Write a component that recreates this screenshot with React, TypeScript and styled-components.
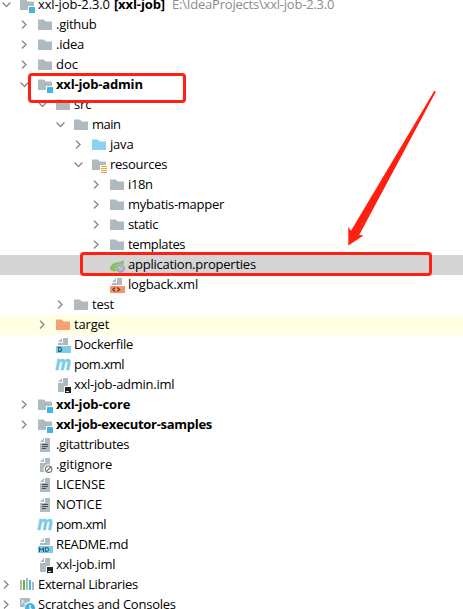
import React from 'react';
import styled, { createGlobalStyle } from 'styled-components';

const GlobalStyle = createGlobalStyle`
  body {
    margin: 0;
    background: #fff;
    overflow: hidden;
  }
`;

const GRAY = '#aeb9c0';
const BLUE = '#40b6e0';
const SKY = '#7ccbe8';
const RED = '#ff2012';

const Panel = styled.main`
  position: relative;
  width: 463px;
  height: 609px;
  overflow: hidden;
  background: #fff;
  color: #000;
  font-family: 'Open Sans', 'Noto Sans', sans-serif;
  font-size: 13px;
`;

const Tree = styled.ul`
  display: flex;
  flex-direction: column;
  margin: -5px 0 0;
  padding: 0;
  list-style: none;
`;

const Row = styled.li<{ $depth: number; $tone?: string }>`
  display: flex;
  flex: none;
  align-items: center;
  box-sizing: border-box;
  height: 20px;
  padding-left: ${(p) => 1 + p.$depth * 18}px;
  background: ${(p) => p.$tone ?? 'transparent'};
  white-space: pre;
`;

const Toggle = styled.span`
  display: flex;
  flex: none;
  width: 18px;
  height: 20px;
  align-items: center;
`;

const Glyph = styled.svg`
  flex: none;
  display: block;
  width: 16px;
  height: 16px;
  margin-right: 3px;
`;

const Label = styled.span<{ $tracking: number; $bold?: boolean }>`
  align-self: flex-start;
  line-height: 18px;
  font-weight: ${(p) => (p.$bold ? 700 : 400)};
  letter-spacing: ${(p) => p.$tracking}px;
`;

const Qualifier = styled(Label)`
  margin-left: 4px;
`;

const Path = styled(Label)`
  margin-left: 7px;
  color: #8c8c8c;
`;

const Outline = styled.div<{ $x: number; $y: number; $w: number; $h: number }>`
  position: absolute;
  left: ${(p) => p.$x}px;
  top: ${(p) => p.$y}px;
  width: ${(p) => p.$w}px;
  height: ${(p) => p.$h}px;
  box-sizing: border-box;
  border: 3px solid ${RED};
  border-radius: 4px;
`;

const ArrowMark = styled.svg`
  position: absolute;
  left: 340px;
  top: 85px;
  width: 105px;
  height: 165px;
`;

type IconName =
  | 'folder' | 'sources' | 'excluded' | 'module' | 'resources' | 'spring' | 'xml'
  | 'docker' | 'maven' | 'iml' | 'text' | 'ignore' | 'markdown' | 'libraries' | 'scratches';

const Folder = ({ fill = GRAY }: { fill?: string }) => (
  <path d="M1 2.500h5.800l2 2H15V13H1z" fill={fill} />
);

const Page = () => (
  <g fill={GRAY}>
    <path d="M7 1v4H3z" />
    <path d="M8 1h5v14H3V6h5z" />
  </g>
);

const ShortPage = () => (
  <g fill={GRAY}>
    <path d="M7 1v4H3z" />
    <path d="M8 1h5v7H3V6h5z" />
  </g>
);

const icons: Record<IconName, React.ReactNode> = {
  folder: <Folder />,
  sources: <Folder fill="#8ad3ee" />,
  excluded: <Folder fill="#f7a072" />,
  module: (
    <>
      <path d="M1 2.500h5.800l2 2H15V9H9v4H1z" fill={GRAY} />
      <path d="M10 10h6v6h-6z" fill={BLUE} />
    </>
  ),
  resources: (
    <>
      <path d="M1 2.500h5.800l2 2H15V8H9v5H1z" fill={GRAY} />
      <path d="M10 9h6v1h-6zM10 11h6v1h-6zM10 13h6v1h-6zM10 15h6v1h-6z" fill="#dba33c" />
    </>
  ),
  spring: (
    <>
      <path d="M14.300 2.500C15.300 5.500 15 8 13 10L8.500 13.600C6 14.800 2.500 14 1.300 12.700 .6 9.500 2.500 6.800 5.500 6c3.500-.9 6.800-.4 8.800-3.500z" fill="#83c067" />
      <circle cx="11.600" cy="11.600" r="4.800" fill="#d5d5d5" />
      <circle cx="11.600" cy="11.600" r="3.100" fill="#dfe3e6" stroke="#97a4ae" strokeWidth="1.400" />
      <circle cx="11.600" cy="11.600" r="4.100" fill="none" stroke="#97a4ae" strokeWidth="1" strokeDasharray="1.700 1.520" />
      <path d="M11.600 9.600v2M10.500 10.700a1.500 1.500 0 1 0 2.200 0" fill="none" stroke="#8593a0" strokeWidth=".8" />
    </>
  ),
  xml: (
    <>
      <ShortPage />
      <path d="M1 9h15v7H1z" fill="#f7946a" />
      <path d="M6.200 10.500l-2.400 2 2.400 2M8.300 10.500l2.400 2-2.400 2" fill="none" stroke="#673522" strokeWidth="1.100" />
    </>
  ),
  docker: (
    <>
      <ShortPage />
      <path d="M1 9h15v7H1z" fill={SKY} />
      <path d="M3.600 10.500v4h1a2 2 0 0 0 0-4z" fill="none" stroke="#26586d" strokeWidth="1.100" />
    </>
  ),
  maven: (
    <text x="0.200" y="13.200" fontSize="19" fontFamily="Open Sans, sans-serif" fontWeight="700" fontStyle="italic" textLength="15.800" lengthAdjust="spacingAndGlyphs" fill={SKY} stroke={SKY} strokeWidth=".5">
      m
    </text>
  ),
  iml: (
    <>
      <g fill={GRAY}>
        <path d="M7 1v4H3z" />
        <path d="M8 1h5v8H9v6H3V6h5z" />
      </g>
      <path d="M10 10h6v6h-6z" fill="#231f24" />
      <path d="M11.300 14h2.400v1h-2.400z" fill="#fff" />
    </>
  ),
  text: (
    <>
      <Page />
      <path d="M5 7h6v1H5zM5 9h6v1H5zM5 11h4v1H5z" fill="#4b5257" />
    </>
  ),
  ignore: (
    <>
      <g fill={GRAY}>
        <path d="M7 1v4H3z" />
        <path d="M8 1h5v6.500A5 5 0 0 0 7.500 15H3V6h5z" />
      </g>
      <circle cx="11.700" cy="12.200" r="3.200" fill="#fff" stroke="#6e6e6e" strokeWidth="1.100" />
      <path d="M9.500 14.400l4.400-4.400" stroke="#6e6e6e" strokeWidth="1.100" />
    </>
  ),
  markdown: (
    <>
      <ShortPage />
      <path d="M1 9h15v7H1z" fill={SKY} />
      <path d="M2.500 15v-4.400l2 2.800 2-2.800V15M8.500 10.600v3.900h1.200a1.950 1.950 0 0 0 0-3.900z" fill="none" stroke="#26586d" strokeWidth="1" />
    </>
  ),
  libraries: (
    <>
      <path d="M1 3h2v10H1zM7 1h2v12H7zM13 5h2v8h-2z" fill={GRAY} />
      <path d="M4 3h2v10H4z" fill="#62b543" />
      <path d="M10 3h2v10h-2z" fill={BLUE} />
    </>
  ),
  scratches: (
    <>
      <path d="M1 1h10v3.500a5.800 5.800 0 0 0-5.500 5.500H1z" fill={GRAY} />
      <path d="M2.200 2.500l2.500 2-2.500 2M5.500 6.700h2" fill="none" stroke="#fff" strokeWidth="1" />
      <circle cx="11" cy="11" r="5" fill={BLUE} />
      <path d="M11 8v3.300l1.800 1.200" fill="none" stroke="#fff" strokeWidth="1.200" />
    </>
  ),
};

const Chevron = ({ open }: { open: boolean }) => (
  <svg width="12" height="20" viewBox="0 0 12 20" fill="none" stroke="#8a8a8a" strokeWidth="1.400">
    {open ? <path d="M1.600 7.600l3.900 3.900 3.900-3.900" /> : <path d="M3 5.700l4 3.900-4 3.900" />}
  </svg>
);

type Node = {
  depth: number;
  icon: IconName;
  name: string;
  tracking: number;
  state?: 'open' | 'closed';
  bold?: boolean;
  tone?: string;
};

const nodes: Node[] = [
  { depth: 0, icon: 'module', name: 'xxl-job-2.3.0', tracking: -0.12, state: 'open' },
  { depth: 1, icon: 'folder', name: '.github', tracking: -0.28, state: 'closed' },
  { depth: 1, icon: 'folder', name: '.idea', tracking: -0.22, state: 'closed' },
  { depth: 1, icon: 'folder', name: 'doc', tracking: 0.05, state: 'closed' },
  { depth: 1, icon: 'module', name: 'xxl-job-admin', tracking: -0.17, state: 'open', bold: true },
  { depth: 2, icon: 'folder', name: 'src', tracking: -0.1, state: 'open' },
  { depth: 3, icon: 'folder', name: 'main', tracking: -0.5, state: 'open' },
  { depth: 4, icon: 'sources', name: 'java', tracking: -0.2, state: 'closed' },
  { depth: 4, icon: 'resources', name: 'resources', tracking: -0.26, state: 'open' },
  { depth: 5, icon: 'folder', name: 'i18n', tracking: -0.4, state: 'closed' },
  { depth: 5, icon: 'folder', name: 'mybatis-mapper', tracking: -0.27, state: 'closed' },
  { depth: 5, icon: 'folder', name: 'static', tracking: -0.34, state: 'closed' },
  { depth: 5, icon: 'folder', name: 'templates', tracking: -0.38, state: 'closed' },
  { depth: 5, icon: 'spring', name: 'application.properties', tracking: -0.25, tone: '#d5d5d5' },
  { depth: 5, icon: 'xml', name: 'logback.xml', tracking: -0.17 },
  { depth: 3, icon: 'folder', name: 'test', tracking: -0.25, state: 'closed' },
  { depth: 2, icon: 'excluded', name: 'target', tracking: -0.17, state: 'closed', tone: '#ffffe4' },
  { depth: 2, icon: 'docker', name: 'Dockerfile', tracking: -0.2 },
  { depth: 2, icon: 'maven', name: 'pom.xml', tracking: -0.45 },
  { depth: 2, icon: 'iml', name: 'xxl-job-admin.iml', tracking: -0.27 },
  { depth: 1, icon: 'module', name: 'xxl-job-core', tracking: -0.14, state: 'closed', bold: true },
  { depth: 1, icon: 'module', name: 'xxl-job-executor-samples', tracking: -0.29, state: 'closed', bold: true },
  { depth: 1, icon: 'text', name: '.gitattributes', tracking: -0.32 },
  { depth: 1, icon: 'ignore', name: '.gitignore', tracking: -0.1 },
  { depth: 1, icon: 'text', name: 'LICENSE', tracking: -0.12 },
  { depth: 1, icon: 'text', name: 'NOTICE', tracking: -0.05 },
  { depth: 1, icon: 'maven', name: 'pom.xml', tracking: -0.45 },
  { depth: 1, icon: 'markdown', name: 'README.md', tracking: -0.35 },
  { depth: 1, icon: 'iml', name: 'xxl-job.iml', tracking: -0.27 },
  { depth: 0, icon: 'libraries', name: 'External Libraries', tracking: -0.33, state: 'closed' },
  { depth: 0, icon: 'scratches', name: 'Scratches and Consoles', tracking: -0.23, state: 'closed' },
];

export default function App() {
  return (
    <>
      <GlobalStyle />
      <Panel>
        <Tree>
          {nodes.map((n, i) => (
            <Row key={i} $depth={n.depth} $tone={n.tone}>
              <Toggle>{n.state && <Chevron open={n.state === 'open'} />}</Toggle>
              <Glyph viewBox="0 0 16 16">{icons[n.icon]}</Glyph>
              <Label $tracking={n.tracking} $bold={n.bold}>{n.name}</Label>
              {i === 0 && (
                <>
                  <Qualifier $tracking={-0.1} $bold>[xxl-job]</Qualifier>
                  <Path $tracking={-0.21}>{'E:\\IdeaProjects\\xxl-job-2.3.0'}</Path>
                </>
              )}
            </Row>
          ))}
        </Tree>
        <Outline $x={28} $y={73} $w={158} $h={30} />
        <Outline $x={80} $y={252} $w={352} $h={24} />
        <ArrowMark viewBox="340 85 105 165">
          <path d="M348.300 245.500V227l2.700 3.700L434.200 91l1.800.6L359.200 235l4.300.5z" fill={RED} />
        </ArrowMark>
      </Panel>
    </>
  );
}
